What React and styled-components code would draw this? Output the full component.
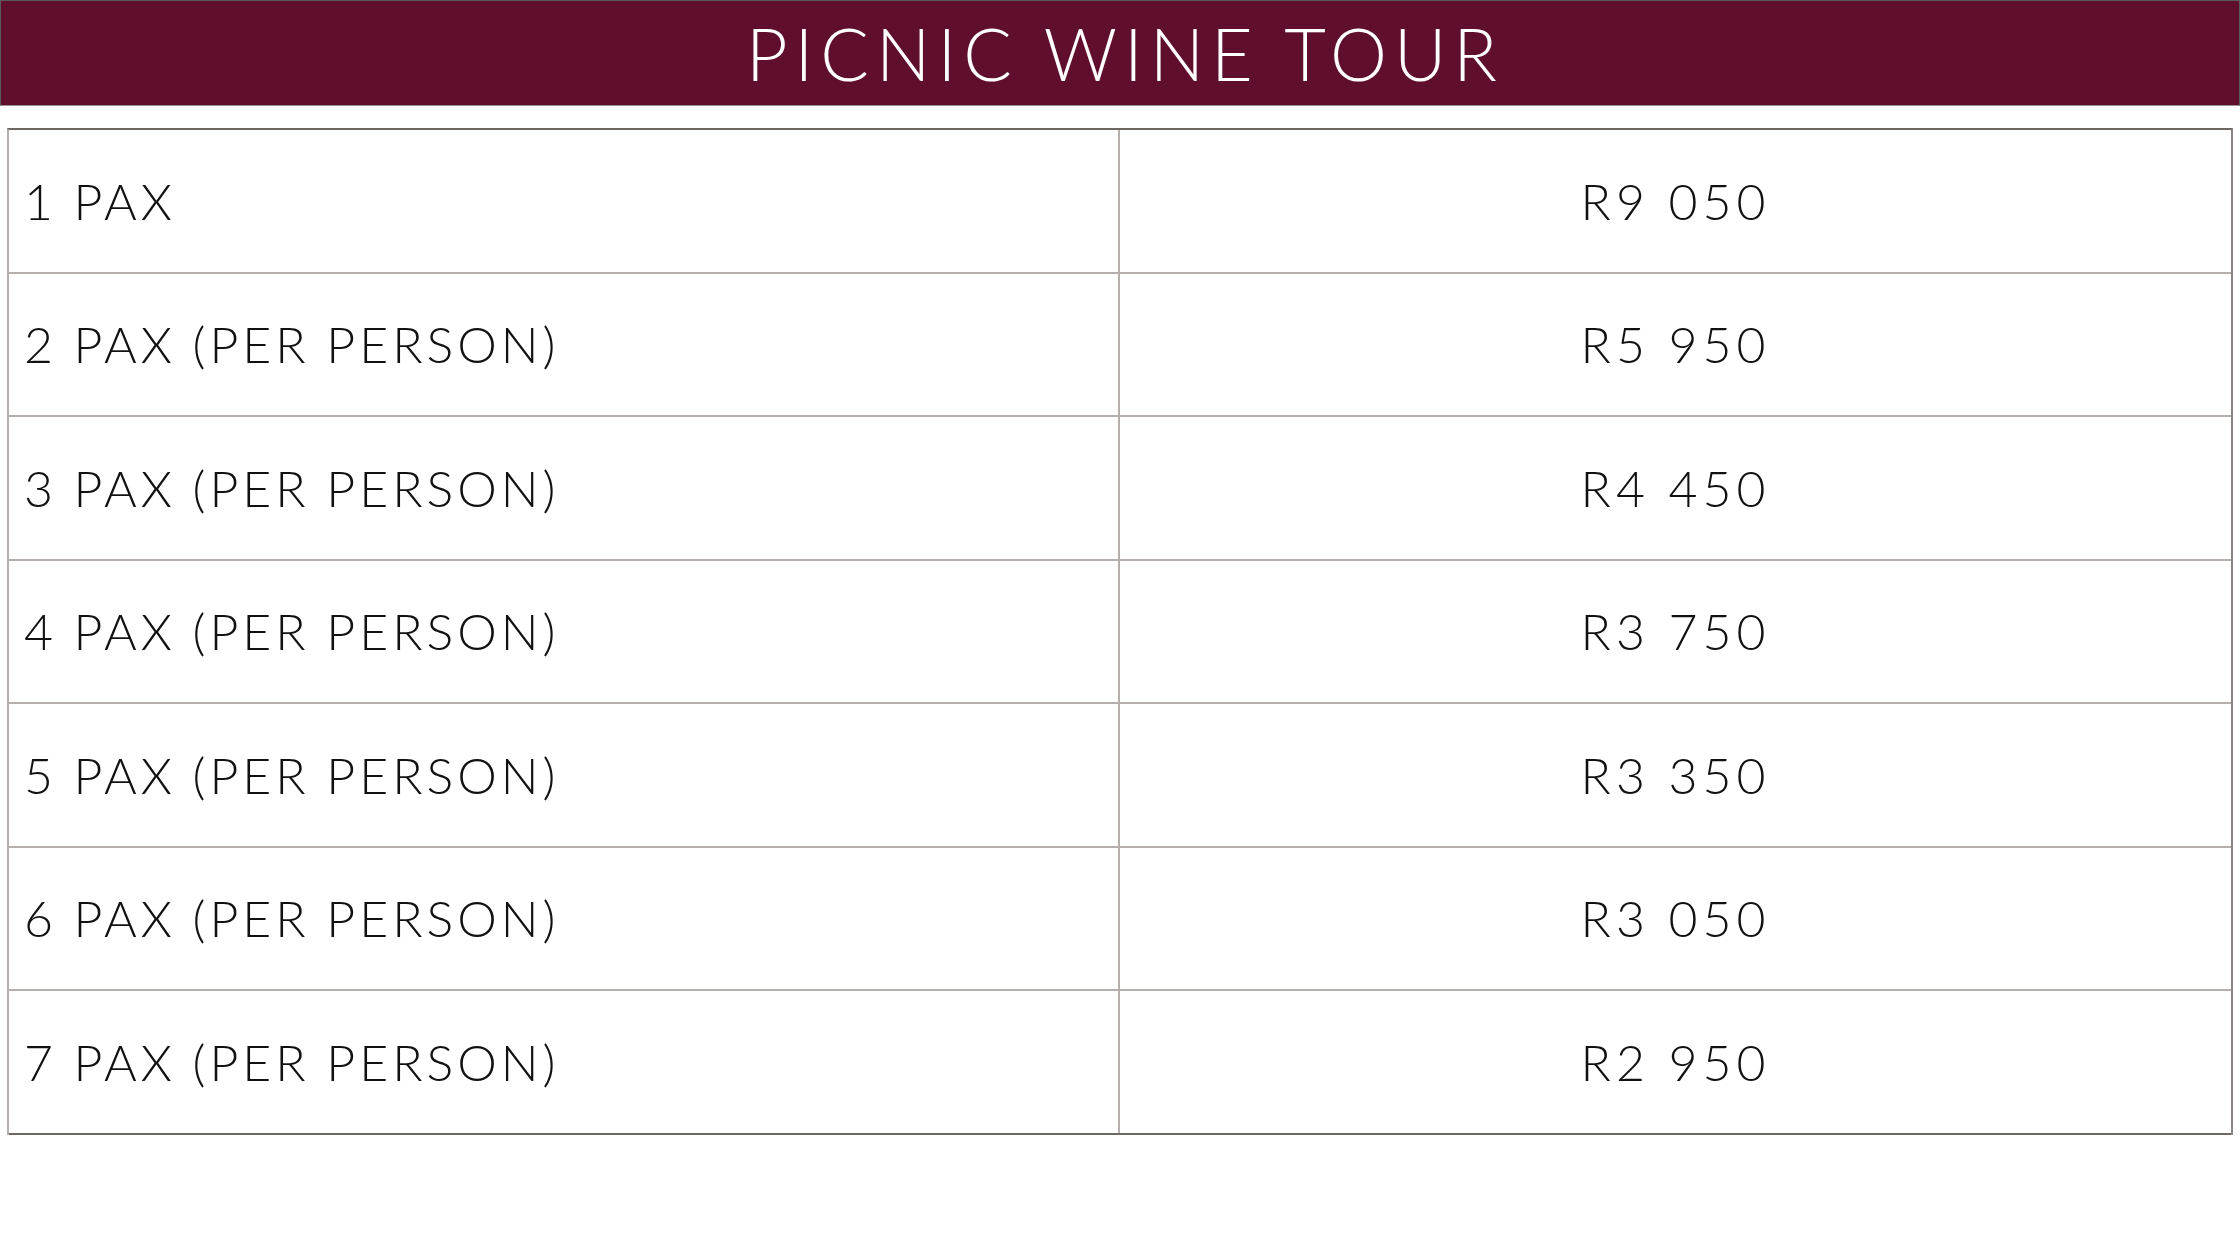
import React from "react";
import styled, { createGlobalStyle } from "styled-components";

const GlobalStyle = createGlobalStyle`
  html, body {
    margin: 0;
    padding: 0;
    background: #ffffff;
  }
  body {
    font-family: Lato, "Open Sans", sans-serif;
  }
`;

const rates = [
  { label: "1 PAX", price: "R9 050" },
  { label: "2 PAX (PER PERSON)", price: "R5 950" },
  { label: "3 PAX (PER PERSON)", price: "R4 450" },
  { label: "4 PAX (PER PERSON)", price: "R3 750" },
  { label: "5 PAX (PER PERSON)", price: "R3 350" },
  { label: "6 PAX (PER PERSON)", price: "R3 050" },
  { label: "7 PAX (PER PERSON)", price: "R2 950" },
];

const App = () => {
  return (
    <>
      <GlobalStyle />
      <StPage>
        <StHeader>
          <StTitle>PICNIC WINE TOUR</StTitle>
        </StHeader>
        <StTable>
          {rates.map((rate, i) => (
            <StRow key={rate.label} $last={i === rates.length - 1}>
              <StLabelCell>{rate.label}</StLabelCell>
              <StPriceCell>{rate.price}</StPriceCell>
            </StRow>
          ))}
        </StTable>
      </StPage>
    </>
  );
};

export default App;

const StPage = styled.div`
  width: 2240px;
  height: 1260px;
  display: flex;
  flex-direction: column;
  background: #ffffff;
`;

const StHeader = styled.div`
  height: 106px;
  box-sizing: border-box;
  background: #5f0e2d;
  border: 1px solid #5a5a5a;
  border-bottom-color: #9a8f93;
  display: flex;
  align-items: center;
  justify-content: center;
`;

const StTitle = styled.h1`
  margin: 0;
  padding-left: 10px;
  color: #ffffff;
  font-family: Lato, "Open Sans", sans-serif;
  font-weight: 300;
  font-size: 72px;
  letter-spacing: 7px;
  line-height: 1;
`;

const StTable = styled.div`
  margin: 22px 7px 0 7px;
  display: flex;
  flex-direction: column;
  border-top: 2px solid #6e6865;
  border-left: 2px solid #b5b0ad;
  border-right: 2px solid #8a8582;
`;

const StRow = styled.div`
  display: grid;
  grid-template-columns: 1111px 1fr;
  height: 143.5px;
  box-sizing: border-box;
  border-bottom: 2px solid ${(p) => (p.$last ? "#6e6865" : "#b5b0ad")};
`;

const StLabelCell = styled.div`
  display: flex;
  align-items: center;
  padding-left: 15px;
  border-right: 2px solid #b5b0ad;
  color: #111111;
  font-size: 50px;
  font-weight: 300;
  letter-spacing: 4px;
  word-spacing: -1px;
`;

const StPriceCell = styled.div`
  display: flex;
  align-items: center;
  justify-content: center;
  color: #111111;
  font-size: 50px;
  font-weight: 300;
  letter-spacing: 5px;
`;
